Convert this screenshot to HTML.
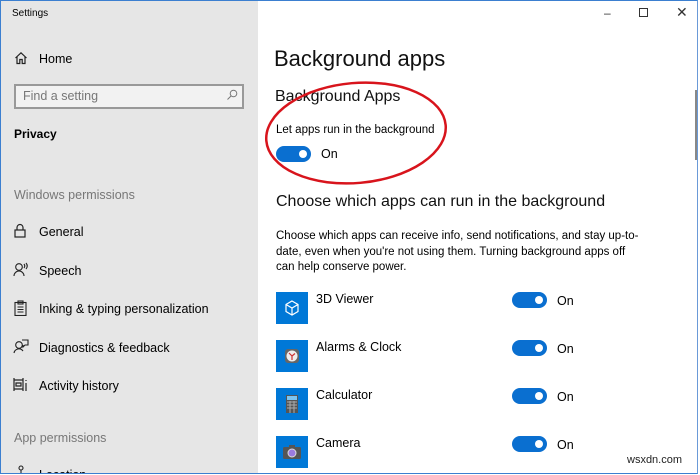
<!DOCTYPE html>
<html><head><meta charset="utf-8"><style>
*{margin:0;padding:0;box-sizing:border-box}
body{width:700px;height:475px;overflow:hidden;font-family:"Liberation Sans",sans-serif;background:#fff;position:relative}
.frame{position:absolute;left:0;top:0;width:698px;height:474px;border:1px solid #3b7fd0;border-right:1px solid #6a9ad8;z-index:5}
.side{position:absolute;left:1px;top:1px;width:257px;height:472px;background:#e6e6e6}
.t{position:absolute;white-space:nowrap;color:#000}
.s{font-size:12.5px}
.gray{color:#777}
svg{position:absolute}
.tile{position:absolute;left:276px;width:32px;height:32px;background:#0078d7}
.tg{position:absolute;width:35px;height:16px;border-radius:8px;background:#0a6fd0}
.tg::after{content:"";position:absolute;right:4px;top:4px;width:8px;height:8px;border-radius:50%;background:#fff}
</style></head><body>
<div class="side"></div>
<div class="frame"></div>
<div class="t" style="left:12px;top:8px;font-size:10px">Settings</div>
<svg style="left:14px;top:51px" width="14" height="14" viewBox="0 0 14 14" fill="none" stroke="#222" stroke-width="1.2"><path d="M1.5 7 L7 1.8 L12.5 7 M3 5.8 V12.5 H5.8 V8.5 H8.2 V12.5 H11 V5.8"/></svg>
<div class="t s" style="left:39px;top:52px">Home</div>
<div style="position:absolute;left:14px;top:84px;width:230px;height:25px;border:2px solid #999;background:#f2f2f2"></div>
<div class="t s gray" style="left:23px;top:89px">Find a setting</div>
<svg style="left:226px;top:89px" width="12" height="12" viewBox="0 0 12 12" fill="none" stroke="#777" stroke-width="1"><circle cx="7.5" cy="4.5" r="3.3"/><path d="M5 7 L1.5 10.5"/></svg>
<div class="t" style="left:14px;top:127px;font-size:12px;font-weight:bold">Privacy</div>
<div class="t s gray" style="left:14px;top:188px">Windows permissions</div>
<svg style="left:14px;top:223px" width="12" height="15" viewBox="0 0 12 15" fill="none" stroke="#222" stroke-width="1.2"><path d="M3 7 V4.5 a3 3 0 0 1 6 0 V7"/><rect x="1" y="7" width="10" height="7"/></svg>
<div class="t s" style="left:39px;top:225px">General</div>
<svg style="left:13px;top:262px" width="16" height="15" viewBox="0 0 16 15" fill="none" stroke="#222" stroke-width="1.1"><circle cx="6" cy="5" r="3.3"/><path d="M1 14 a5 5 0 0 1 10 0 M11 2 q1.5 2 0 4 M13 1 q2.5 3 0 6"/></svg>
<div class="t s" style="left:39px;top:264px">Speech</div>
<svg style="left:14px;top:300px" width="13" height="16" viewBox="0 0 13 16" fill="none" stroke="#222" stroke-width="1.1"><rect x="1" y="2.5" width="11" height="13"/><rect x="4" y="1" width="5" height="3"/><path d="M3.5 7h6M3.5 9.5h6M3.5 12h6"/></svg>
<div class="t s" style="left:39px;top:302px">Inking &amp; typing personalization</div>
<svg style="left:13px;top:339px" width="16" height="15" viewBox="0 0 16 15" fill="none" stroke="#222" stroke-width="1.1"><circle cx="6" cy="6" r="3.3"/><path d="M1 14 a5 5 0 0 1 9 -2 M9 1 H15 V6 H12 L10 8 V6"/></svg>
<div class="t s" style="left:39px;top:341px">Diagnostics &amp; feedback</div>
<svg style="left:13px;top:377px" width="16" height="15" viewBox="0 0 16 15" fill="none" stroke="#222" stroke-width="1.2"><path d="M1 1v13M10 1v13M1 3h9M1 12h9M3 6h5v3H3z M13 3v1M13 6v8"/></svg>
<div class="t s" style="left:39px;top:379px">Activity history</div>
<div class="t s gray" style="left:14px;top:431px">App permissions</div>
<div style="position:absolute;left:0;top:460px;width:258px;height:13px;overflow:hidden">
<svg style="left:15px;top:5px" width="12" height="12" viewBox="0 0 12 12" fill="none" stroke="#222" stroke-width="1.1"><circle cx="6" cy="3" r="2"/><path d="M6 5v3M1 9h10"/></svg>
<div class="t s" style="left:39px;top:8px">Location</div>
</div>

<div class="t" style="left:604px;top:6px;font-size:12px;color:#333">&#8211;</div>
<div style="position:absolute;left:639px;top:8px;width:9px;height:9px;border:1px solid #333"></div>
<div class="t" style="left:676px;top:4px;font-size:14px;color:#333">&#10005;</div>
<div style="position:absolute;left:695px;top:90px;width:2px;height:70px;background:#888"></div>

<div class="t" style="left:274px;top:46px;font-size:22px;color:#111">Background apps</div>
<div class="t" style="left:275px;top:88px;font-size:16px;color:#111">Background Apps</div>
<div class="t" style="left:276px;top:124px;font-size:11.5px">Let apps run in the background</div>
<div class="tg" style="left:276px;top:146px"></div>
<div class="t s" style="left:321px;top:147px">On</div>
<svg style="left:0;top:0" width="700" height="475"><ellipse cx="356" cy="133" rx="90" ry="50" transform="rotate(-5 356 133)" fill="none" stroke="#d8141c" stroke-width="2.5"/></svg>
<div class="t" style="left:276px;top:193px;font-size:16px;color:#111">Choose which apps can run in the background</div>
<div class="t" style="left:276px;top:229px;font-size:11.5px;line-height:15.5px">Choose which apps can receive info, send notifications, and stay up-to-<br>date, even when you're not using them. Turning background apps off<br>can help conserve power.</div>

<div class="tile" style="top:292px"></div>
<svg style="left:284px;top:300px" width="16" height="16" viewBox="0 0 16 16" fill="none" stroke="#fff" stroke-width="1.2"><path d="M8 1 L14 4.5 V11.5 L8 15 L2 11.5 V4.5 Z M2 4.5 L8 8 L14 4.5 M8 8 V15"/></svg>
<div class="t s" style="left:316px;top:292px">3D Viewer</div>
<div class="tg" style="left:512px;top:292px"></div><div class="t s" style="left:557px;top:294px">On</div>

<div class="tile" style="top:340px"></div>
<svg style="left:284px;top:348px" width="16" height="16" viewBox="0 0 16 16"><rect x="1" y="1" width="14" height="14" rx="3" fill="#666"/><circle cx="8" cy="8" r="5.5" fill="#eee"/><path d="M8 8 L5 5 M8 8 L11 5.5 M8 8 V12" stroke="#c33" stroke-width="1.2"/></svg>
<div class="t s" style="left:316px;top:340px">Alarms &amp; Clock</div>
<div class="tg" style="left:512px;top:340px"></div><div class="t s" style="left:557px;top:342px">On</div>

<div class="tile" style="top:388px"></div>
<svg style="left:286px;top:395px" width="12" height="18" viewBox="0 0 12 18"><rect x="0" y="0" width="12" height="18" fill="#555"/><rect x="1" y="1" width="10" height="4" fill="#7cc4f0"/><path d="M1 7h10M1 10h10M1 13h10M4 6v12M8 6v12" stroke="#aaa" stroke-width="1"/></svg>
<div class="t s" style="left:316px;top:388px">Calculator</div>
<div class="tg" style="left:512px;top:388px"></div><div class="t s" style="left:557px;top:390px">On</div>

<div class="tile" style="top:436px"></div>
<svg style="left:283px;top:445px" width="18" height="14" viewBox="0 0 18 14"><rect x="0" y="2" width="18" height="12" rx="1.5" fill="#555"/><rect x="6" y="0" width="6" height="3" fill="#555"/><circle cx="9" cy="8" r="4" fill="#9b7be0" stroke="#ddd" stroke-width="1"/></svg>
<div class="t s" style="left:316px;top:436px">Camera</div>
<div class="tg" style="left:512px;top:436px"></div><div class="t s" style="left:557px;top:438px">On</div>

<div class="t" style="left:627px;top:454px;font-size:11px;color:#222">wsxdn.com</div>
</body></html>
